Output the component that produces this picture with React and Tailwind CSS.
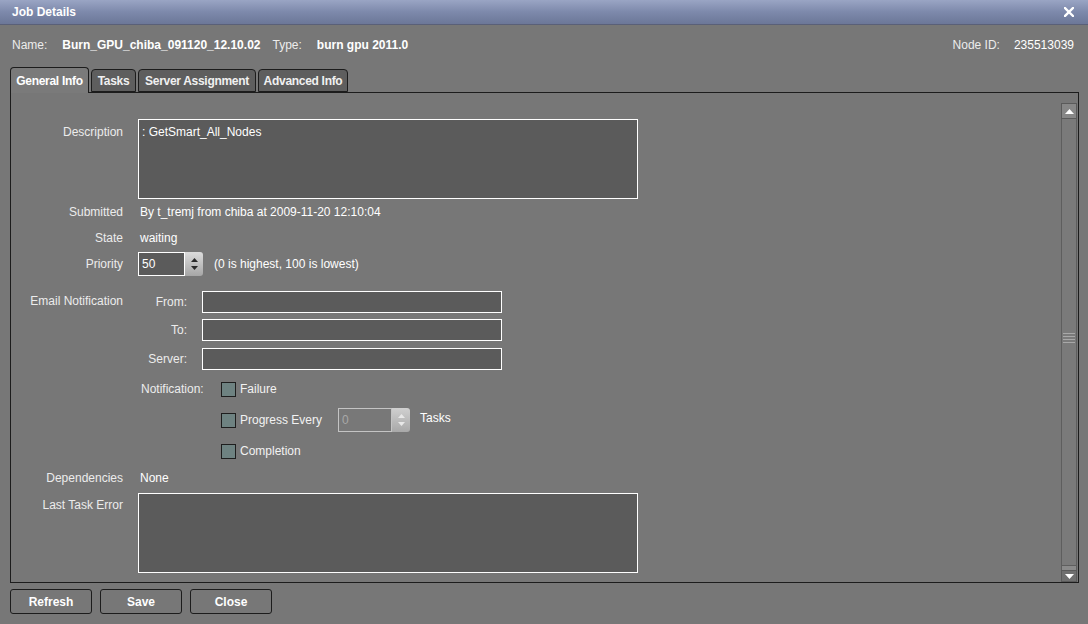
import React from "react";

const font = { fontFamily: '"Liberation Sans", Arial, sans-serif' };

function Spin({ value, disabled }) {
  return (
    <div className="flex h-[24px]">
      <div
        className={
          disabled
            ? "w-[54px] h-full border border-[#c4c4c4] bg-[#787878] text-[#a8a8a8] pl-[3px] flex items-center"
            : "w-[47px] h-full border border-white bg-[#5b5b5b] text-white pl-[3px] flex items-center"
        }
      >
        {value}
      </div>
      <div
        className={
          "w-[18px] h-full rounded-r-[3px] flex flex-col items-center justify-center gap-[4px] " +
          (disabled ? "bg-gradient-to-b from-[#d0d0d0] to-[#a8a8a8]" : "bg-gradient-to-b from-[#dcdcdc] to-[#a6a6a6]")
        }
      >
        <svg width="7" height="4" viewBox="0 0 7 4">
          <path d="M0 4 L3.5 0 L7 4 Z" fill={disabled ? "#e8e8e8" : "#2a2a2a"} />
        </svg>
        <svg width="7" height="4" viewBox="0 0 7 4">
          <path d="M0 0 L7 0 L3.5 4 Z" fill={disabled ? "#e8e8e8" : "#2a2a2a"} />
        </svg>
      </div>
    </div>
  );
}

function Check({ label }) {
  return (
    <div className="flex items-center gap-[4px]">
      <div className="w-[15px] h-[15px] border border-[#1e1e1e] bg-[#6e8281]" />
      <span className="text-[#f2f2f2]">{label}</span>
    </div>
  );
}

function Field() {
  return <div className="w-[300px] h-[22px] border border-white bg-[#5b5b5b]" />;
}

function Btn({ children }) {
  return (
    <button className="w-[82px] h-[25px] border border-[#1c1c1c] rounded-[3px] bg-[#777777] text-white font-bold text-[12px]">
      {children}
    </button>
  );
}

export default function App() {
  const tabs = ["Tasks", "Server Assignment", "Advanced Info"];
  return (
    <div style={font} className="w-[1088px] h-[624px] bg-[#777777] text-[12px] text-white flex flex-col overflow-hidden">
      {/* title bar */}
      <div className="h-[25px] flex items-center justify-between px-[12px] bg-gradient-to-b from-[#9aa5c4] via-[#7d89ab] to-[#6c7798] border-b border-[#5a6078]">
        <span className="font-bold text-[12px] text-white">Job Details</span>
        <svg width="10" height="10" viewBox="0 0 10 10" className="mr-[2px]">
          <path d="M1 1 L9 9 M9 1 L1 9" stroke="white" strokeWidth="2.4" strokeLinecap="square" />
        </svg>
      </div>

      {/* header */}
      <div className="h-[40px] flex items-center px-[12px] text-[#ececec]">
        <span>Name:</span>
        <span className="ml-[15px] font-bold text-white">Burn_GPU_chiba_091120_12.10.02</span>
        <span className="ml-[12px]">Type:</span>
        <span className="ml-[15px] font-bold text-white">burn gpu 2011.0</span>
        <span className="ml-auto">Node ID:</span>
        <span className="ml-[14px] mr-[2px] text-white">235513039</span>
      </div>

      {/* tabs */}
      <div className="flex items-end h-[27px] mx-[10px] gap-[2px]">
        <div className="h-[26px] w-[79px] -mb-px z-10 border border-b-0 border-[#1c1c1c] rounded-t-[4px] bg-[#7a7a7a] flex items-center justify-center font-bold text-white tracking-[-0.3px]">
          General Info
        </div>
        {tabs.map((t, i) => (
          <div
            key={t}
            className={
              "h-[23px] border border-[#1c1c1c] rounded-t-[4px] bg-[#5e5e5e] flex items-center justify-center font-bold text-[#f0f0f0] tracking-[-0.3px] " +
              (i === 0 ? "w-[45px]" : i === 1 ? "w-[118px]" : "w-[90px]")
            }
          >
            {t}
          </div>
        ))}
      </div>

      {/* panel */}
      <div className="mx-[10px] w-[1069px] h-[491px] border border-[#1c1c1c] flex">
        <div className="flex-1 flex flex-col pt-[26px] text-[#ececec]">
          <div className="flex">
            <div className="w-[112px] text-right pt-[4px]">Description</div>
            <div className="ml-[15px] w-[500px] h-[80px] border border-white bg-[#5b5b5b] px-[3px] pt-[3px] text-white">
              : GetSmart_All_Nodes
            </div>
          </div>
          <div className="flex items-center h-[24px] mt-[1px]">
            <div className="w-[112px] text-right">Submitted</div>
            <div className="ml-[17px] text-white">By t_tremj from chiba at 2009-11-20 12:10:04</div>
          </div>
          <div className="flex items-center h-[24px] mt-[2px]">
            <div className="w-[112px] text-right">State</div>
            <div className="ml-[17px] text-white">waiting</div>
          </div>
          <div className="flex items-center h-[24px] mt-[2px]">
            <div className="w-[112px] text-right">Priority</div>
            <div className="ml-[15px]">
              <Spin value="50" />
            </div>
            <div className="ml-[11px] text-white">(0 is highest, 100 is lowest)</div>
          </div>

          <div className="flex mt-[15px]">
            <div className="w-[112px] text-right pt-[1px]">Email Notification</div>
            <div className="ml-[15px] flex flex-col">
              <div className="flex items-center h-[22px]">
                <div className="w-[49px] text-right">From:</div>
                <div className="ml-[15px]">
                  <Field />
                </div>
              </div>
              <div className="flex items-center h-[22px] mt-[6px]">
                <div className="w-[49px] text-right">To:</div>
                <div className="ml-[15px]">
                  <Field />
                </div>
              </div>
              <div className="flex items-center h-[22px] mt-[7px]">
                <div className="w-[49px] text-right">Server:</div>
                <div className="ml-[15px]">
                  <Field />
                </div>
              </div>
              <div className="flex items-center h-[20px] mt-[9px]">
                <div className="ml-[3px] w-[80px]">Notification:</div>
                <Check label="Failure" />
              </div>
              <div className="flex items-center h-[24px] mt-[9px] pl-[83px]">
                <Check label="Progress Every" />
                <div className="ml-[16px]">
                  <Spin value="0" disabled />
                </div>
                <div className="ml-[10px] -mt-[4px] text-white">Tasks</div>
              </div>
              <div className="flex items-center h-[20px] mt-[9px] pl-[83px]">
                <Check label="Completion" />
              </div>
            </div>
          </div>

          <div className="flex items-center h-[24px] mt-[5px]">
            <div className="w-[112px] text-right">Dependencies</div>
            <div className="ml-[17px] text-white">None</div>
          </div>
          <div className="flex mt-[3px]">
            <div className="w-[112px] text-right pt-[3px]">Last Task Error</div>
            <div className="ml-[15px] w-[500px] h-[80px] border border-white bg-[#5b5b5b]" />
          </div>
        </div>

        {/* scrollbar */}
        <div className="w-[16px] mr-[1px] mt-[10px] flex flex-col">
          <div className="h-[16px] border border-[#5a5a5a] bg-[#878787] flex items-center justify-center">
            <svg width="9" height="5" viewBox="0 0 9 5">
              <path d="M0 5 L4.5 0 L9 5 Z" fill="white" />
            </svg>
          </div>
          <div className="flex-1 border-x border-[#5e5e5e] bg-[#7a7a7a] flex flex-col items-center pt-[214px]">
            <div className="w-[12px] flex flex-col gap-[2px]">
              <div className="h-px bg-[#a8a8a8]" />
              <div className="h-px bg-[#a8a8a8]" />
              <div className="h-px bg-[#a8a8a8]" />
              <div className="h-px bg-[#a8a8a8]" />
            </div>
          </div>
          <div className="h-[5px] border-x border-t border-[#5e5e5e] bg-[#8a8a8a]" />
          <div className="h-[12px] border border-[#5a5a5a] bg-[#6f6f6f] flex items-center justify-center">
            <svg width="9" height="5" viewBox="0 0 9 5">
              <path d="M0 0 L9 0 L4.5 5 Z" fill="white" />
            </svg>
          </div>
        </div>
      </div>

      {/* buttons */}
      <div className="flex gap-[8px] mx-[10px] mt-[6px]">
        <Btn>Refresh</Btn>
        <Btn>Save</Btn>
        <Btn>Close</Btn>
      </div>
    </div>
  );
}
